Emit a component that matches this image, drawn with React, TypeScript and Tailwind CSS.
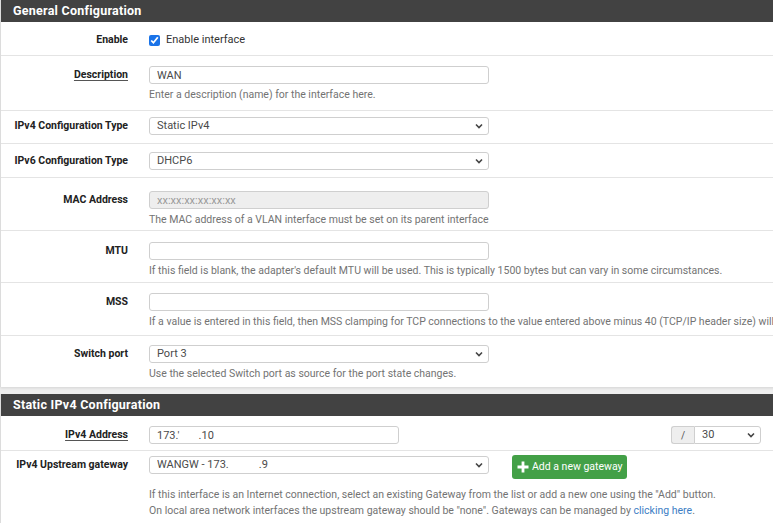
// Interface settings — General / Static IPv4 configuration
import type { ReactNode } from "react"

const Chevron = () => (
  <svg
    className="pointer-events-none absolute right-[6px] top-1/2 -translate-y-1/2"
    width="8"
    height="6"
    viewBox="0 0 8 6"
  >
    <path d="M1 1.5 L4 4.5 L7 1.5" fill="none" stroke="#444" strokeWidth="1.6" />
  </svg>
)

const Select = ({ value, width }: { value: string; width: string }) => (
  <div className={`relative ${width}`}>
    <select
      defaultValue={value}
      className="block h-[18px] w-full appearance-none rounded-[3px] border border-[#cfcfcf] bg-white pl-[7px] text-[11px] leading-[16px] text-[#4a4a4a] outline-none"
    >
      <option>{value}</option>
    </select>
    <Chevron />
  </div>
)

const Input = ({ value = "", placeholder = "", disabled = false, width = "w-[340px]" }: {
  value?: string
  placeholder?: string
  disabled?: boolean
  width?: string
}) => (
  <input
    type="text"
    defaultValue={value}
    placeholder={placeholder}
    disabled={disabled}
    className={`block h-[18px] ${width} rounded-[3px] border border-[#cfcfcf] px-[7px] text-[11px] text-[#4a4a4a] outline-none placeholder:text-[#9a9a9a] ${
      disabled ? "bg-[#eeeeee] text-[9px]" : "bg-white"
    }`}
  />
)

const Help = ({ children }: { children: ReactNode }) => (
  <p className="mt-[4px] whitespace-nowrap text-[10.5px] leading-[14px] text-[#737373]">{children}</p>
)

interface RowProps {
  label: string
  underline?: boolean
  pad?: string
  lh?: string
  last?: boolean
  children: ReactNode
}

const Row = ({ label, underline, pad = "py-[10px]", lh = "leading-[18px]", last, children }: RowProps) => (
  <div className={`flex items-start ${pad} ${last ? "" : "border-b border-[#e4e4e4]"}`}>
    <div className={`w-[127px] shrink-0 text-right text-[10.5px] font-bold text-[#222] ${lh}`}>
      <span className={underline ? "underline decoration-[#555] underline-offset-[2px]" : ""}>{label}</span>
    </div>
    <div className="min-w-0 flex-1 pl-[21px]">{children}</div>
  </div>
)

const Header = ({ title }: { title: string }) => (
  <div className="h-[22px] bg-[#424242] pl-[12px] text-[12.5px] font-bold leading-[22px] tracking-[0.02em] text-white">
    {title}
  </div>
)

const GAP = "\u00a0".repeat(11)

export default function App() {
  return (
    <div className="h-[523px] w-[773px] overflow-hidden bg-[#efefef] font-['Roboto',sans-serif]">
      {/* General Configuration */}
      <div className="w-[800px] border-l border-[#dcdcdc] bg-white shadow-[0_1px_3px_rgba(0,0,0,0.12)]">
        <Header title="General Configuration" />
        <Row label="Enable" lh="leading-[12px]" pad="pt-[12px] pb-[9px]">
          <label className="flex h-[12px] items-center gap-[6px] text-[11px] leading-[12px] text-[#333]">
            <input type="checkbox" defaultChecked className="m-0 block h-[11px] w-[11px] accent-[#1a73e8]" />
            Enable interface
          </label>
        </Row>
        <Row label="Description" underline pad="pt-[10px] pb-[8px]">
          <Input value="WAN" />
          <Help>Enter a description (name) for the interface here.</Help>
        </Row>
        <Row label="IPv4 Configuration Type" pad="pt-[6px] pb-[8px]">
          <Select value="Static IPv4" width="w-[340px]" />
        </Row>
        <Row label="IPv6 Configuration Type" pad="pt-[8px] pb-[7px]">
          <Select value="DHCP6" width="w-[340px]" />
        </Row>
        <Row label="MAC Address" pad="pt-[13px] pb-[3px]">
          <Input placeholder="xx:xx:xx:xx:xx:xx" disabled />
          <Help>The MAC address of a VLAN interface must be set on its parent interface</Help>
        </Row>
        <Row label="MTU" pad="pt-[11px] pb-[4px]">
          <Input />
          <Help>
            If this field is blank, the adapter's default MTU will be used. This is typically 1500 bytes but can
            vary in some circumstances.
          </Help>
        </Row>
        <Row label="MSS" pad="pt-[10px] pb-[6px]">
          <Input />
          <Help>
            If a value is entered in this field, then MSS clamping for TCP connections to the value entered above
            minus 40 (TCP/IP header size) will be in effect.
          </Help>
        </Row>
        <Row label="Switch port" pad="pt-[9px] pb-[6px]" last>
          <Select value="Port 3" width="w-[340px]" />
          <Help>Use the selected Switch port as source for the port state changes.</Help>
        </Row>
      </div>

      {/* Static IPv4 Configuration */}
      <div className="mt-[7px] w-[800px] border-l border-[#dcdcdc] bg-white">
        <Header title="Static IPv4 Configuration" />
        <Row label="IPv4 Address" underline pad="pt-[10px] pb-[6px]">
          <div className="flex items-center">
            <Input value={"173.'       .10"} width="w-[250px]" />
            <div className="ml-[272px] flex">
              <span className="flex h-[18px] w-[23px] items-center justify-center rounded-l-[3px] border border-r-0 border-[#cfcfcf] bg-[#eeeeee] text-[10px] text-[#555]">
                /
              </span>
              <div className="relative w-[67px]">
                <select
                  defaultValue="30"
                  className="block h-[18px] w-full appearance-none rounded-r-[3px] border border-[#cfcfcf] bg-white pl-[7px] text-[11px] leading-[16px] text-[#4a4a4a] outline-none"
                >
                  <option>30</option>
                </select>
                <Chevron />
              </div>
            </div>
          </div>
        </Row>
        <Row label="IPv4 Upstream gateway" pad="pt-[5px] pb-[8px]" last>
          <div className="flex items-start">
            <Select value={`WANGW - 173.${GAP}.9`} width="w-[340px]" />
            <button
              type="button"
              className="-mt-[1px] ml-[23px] flex h-[24px] items-center gap-[3px] rounded-[3px] bg-[#43a047] pl-[5px] pr-[4px] text-[10.5px] text-white"
            >
              <svg width="12" height="12" viewBox="0 0 12 12">
                <path d="M6 0.5 V11.5 M0.5 6 H11.5" stroke="white" strokeWidth="2.8" />
              </svg>
              Add a new gateway
            </button>
          </div>
          <p className="mt-[8px] whitespace-nowrap text-[10.5px] leading-[16px] text-[#737373]">
            If this interface is an Internet connection, select an existing Gateway from the list or add a new one
            using the "Add" button.
            <br />
            On local area network interfaces the upstream gateway should be "none". Gateways can be managed by{" "}
            <a className="text-[#3b7dc4]">clicking here</a>.
          </p>
        </Row>
      </div>
    </div>
  )
}
